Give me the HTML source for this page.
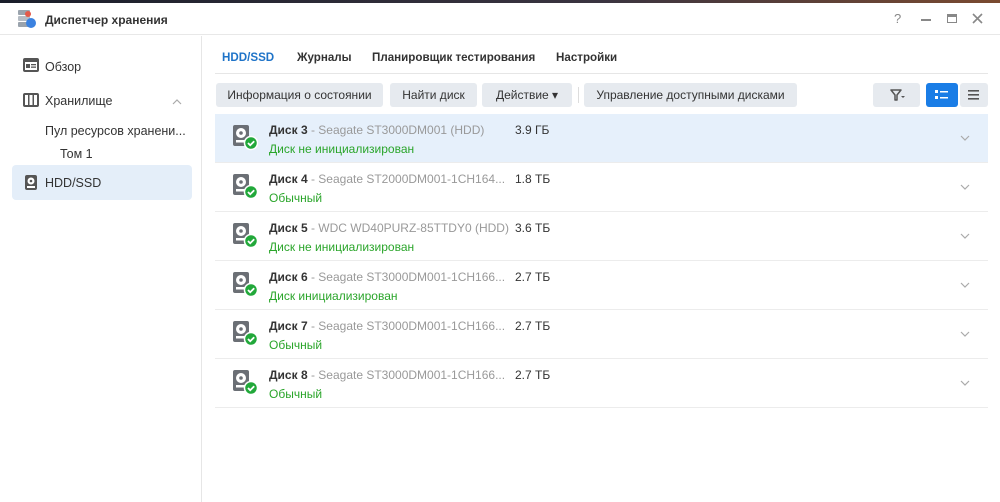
<!DOCTYPE html><html><head><meta charset="utf-8"><style>
*{margin:0;padding:0;box-sizing:border-box}
body{width:1000px;height:502px;overflow:hidden;background:#fff;font-family:"Liberation Sans","DejaVu Sans",sans-serif;font-size:12px;color:#333;position:relative}
.top{position:absolute;left:0;top:0;width:1000px;height:3px;background:linear-gradient(90deg,#1a1e2a,#3a3440 60%,#7a4a30)}
.title{position:absolute;left:0;top:3px;width:1000px;height:32px;border-bottom:1px solid #e8e8e8}
.title span{position:absolute;left:45px;top:10px;font-weight:bold;font-size:12px;color:#333}
.side{position:absolute;left:0;top:36px;width:202px;height:466px;border-right:1px solid #e6e6e6}
.si{position:absolute;left:45px;font-size:12.5px;color:#333}
.a{position:absolute;}
.btn{position:absolute;top:83px;height:24px;background:#e6eaef;border-radius:3px;font-size:12px;color:#333;line-height:24px;text-align:center}
.row{position:absolute;left:215px;width:773px;height:49px;border-bottom:1px solid #ececec}
.row .n{position:absolute;left:54px;top:9px;font-size:12px;white-space:nowrap}
.row .n b{color:#333}.row .n i{font-style:normal;color:#999}
.row .s{position:absolute;left:54px;top:28px;color:#2aa52a;font-size:12px}
.row .sz{position:absolute;left:300px;top:9px;color:#333}
.row svg.ic{position:absolute;left:17px;top:11px}
.row svg.ch{position:absolute;left:745px;top:21px}
.tab{position:absolute;top:51px;font-weight:bold;font-size:11.6px}
</style></head><body>
<div class="top"></div>
<div class="title">
<svg class="a" style="left:17px;top:6px" width="20" height="20"><rect x="1" y="1" width="12" height="5" rx="1" fill="#9aa3ad"/><rect x="1" y="7" width="12" height="5" rx="1" fill="#b5bcc4"/><rect x="1" y="13" width="12" height="5" rx="1" fill="#9aa3ad"/><circle cx="14" cy="14" r="5" fill="#3b82e0"/><circle cx="11" cy="5" r="3" fill="#e35a4a"/></svg>
<span>Диспетчер хранения</span>
<div class="a" style="left:894px;top:8px;font-size:13px;color:#888">?</div>
<div class="a" style="left:921px;top:16px;width:10px;height:2px;background:#888"></div>
<div class="a" style="left:947px;top:11px;width:10px;height:9px;border:1.5px solid #888;border-top-width:3px"></div>
<svg class="a" style="left:972px;top:10px" width="11" height="11"><path d="M1 1L10 10M10 1L1 10" stroke="#888" stroke-width="1.6"/></svg>
</div>
<div class="side">
<svg class="a" style="left:23px;top:22px" width="16" height="14"><rect width="16" height="14" rx="2" fill="#555"/><rect x="2" y="4" width="12" height="8" fill="#fff"/><rect x="3" y="6" width="4" height="4" fill="#555"/><rect x="8" y="6" width="5" height="1.3" fill="#555"/><rect x="8" y="8.5" width="5" height="1.3" fill="#555"/></svg>
<div class="si" style="top:24px">Обзор</div>
<svg class="a" style="left:23px;top:57px" width="16" height="14"><rect width="16" height="14" rx="2" fill="#555"/><rect x="2" y="2" width="3" height="10" fill="#fff"/><rect x="6.5" y="2" width="3" height="10" fill="#fff"/><rect x="11" y="2" width="3" height="10" fill="#fff"/></svg>
<div class="si" style="top:58px">Хранилище</div>
<svg class="a" style="left:172px;top:63px" width="10" height="6"><path d="M1 5L5 1L9 5" stroke="#aaa" stroke-width="1.2" fill="none"/></svg>
<div class="si" style="top:88px">Пул ресурсов хранени...</div>
<div class="si" style="top:111px;left:60px">Том 1</div>
<div class="a" style="left:12px;top:129px;width:180px;height:35px;background:#e4eef9;border-radius:4px"></div>
<svg class="a" style="left:25px;top:139px" width="12" height="15"><rect width="12" height="15" rx="2" fill="#555"/><circle cx="6" cy="6" r="3.5" fill="#fff"/><circle cx="6" cy="6" r="1.3" fill="#555"/><rect x="2" y="11" width="8" height="2" fill="#fff"/></svg>
<div class="si" style="top:140px">HDD/SSD</div>
</div>
<div class="tab" style="left:222px;color:#1e73c8">HDD/SSD</div>
<div class="tab" style="left:297px">Журналы</div>
<div class="tab" style="left:372px">Планировщик тестирования</div>
<div class="tab" style="left:556px">Настройки</div>
<div class="a" style="left:215px;top:73px;width:773px;height:1px;background:#e6e6e6"></div>
<div class="btn" style="left:216px;width:167px">Информация о состоянии</div>
<div class="btn" style="left:390px;width:87px">Найти диск</div>
<div class="btn" style="left:482px;width:90px">Действие ▾</div>
<div class="a" style="left:578px;top:87px;width:1px;height:16px;background:#ddd"></div>
<div class="btn" style="left:584px;width:213px">Управление доступными дисками</div>
<div class="btn" style="left:873px;width:47px"></div>
<svg class="a" style="left:890px;top:88px" width="16" height="14"><path d="M1 2H11L7 7V12L5 12V7Z" fill="none" stroke="#555" stroke-width="1.5" stroke-linejoin="round"/><path d="M11 8H15L13 10Z" fill="#555"/></svg>
<div class="btn" style="left:926px;width:32px;background:#1a7de6"></div>
<svg class="a" style="left:935px;top:89px" width="14" height="12"><rect x="0" y="1" width="3" height="3" fill="#fff"/><rect x="5" y="2" width="8" height="1.5" fill="#fff"/><rect x="0" y="7" width="3" height="3" fill="#fff"/><rect x="5" y="8" width="8" height="1.5" fill="#fff"/></svg>
<div class="btn" style="left:960px;width:28px"></div>
<svg class="a" style="left:968px;top:90px" width="12" height="10"><rect y="0" width="11" height="1.6" fill="#555"/><rect y="4" width="11" height="1.6" fill="#555"/><rect y="8" width="11" height="1.6" fill="#555"/></svg>
<div class="row" style="top:114px;background:#e6f0fb">
<svg class="ic" width="26" height="26"><rect x="1" y="0" width="16" height="21" rx="2" fill="#6b6f75"/><circle cx="9" cy="8" r="5" fill="#fff"/><circle cx="9" cy="8" r="1.8" fill="#6b6f75"/><rect x="4" y="15" width="10" height="2.5" fill="#fff"/><circle cx="19" cy="18" r="6.5" fill="#22a83a" stroke="#fff" stroke-width="1.5"/><path d="M16 18l2.2 2.2 4-4" stroke="#fff" stroke-width="1.8" fill="none"/></svg>
<div class="n"><b>Диск 3</b> <i>- Seagate ST3000DM001 (HDD)</i></div><div class="sz">3.9 ГБ</div><div class="s">Диск не инициализирован</div><svg class="ch" width="10" height="6"><path d="M1 1L5 5L9 1" stroke="#aaa" stroke-width="1.2" fill="none"/></svg></div>
<div class="row" style="top:163px">
<svg class="ic" width="26" height="26"><rect x="1" y="0" width="16" height="21" rx="2" fill="#6b6f75"/><circle cx="9" cy="8" r="5" fill="#fff"/><circle cx="9" cy="8" r="1.8" fill="#6b6f75"/><rect x="4" y="15" width="10" height="2.5" fill="#fff"/><circle cx="19" cy="18" r="6.5" fill="#22a83a" stroke="#fff" stroke-width="1.5"/><path d="M16 18l2.2 2.2 4-4" stroke="#fff" stroke-width="1.8" fill="none"/></svg>
<div class="n"><b>Диск 4</b> <i>- Seagate ST2000DM001-1CH164...</i></div><div class="sz">1.8 ТБ</div><div class="s">Обычный</div><svg class="ch" width="10" height="6"><path d="M1 1L5 5L9 1" stroke="#aaa" stroke-width="1.2" fill="none"/></svg></div>
<div class="row" style="top:212px">
<svg class="ic" width="26" height="26"><rect x="1" y="0" width="16" height="21" rx="2" fill="#6b6f75"/><circle cx="9" cy="8" r="5" fill="#fff"/><circle cx="9" cy="8" r="1.8" fill="#6b6f75"/><rect x="4" y="15" width="10" height="2.5" fill="#fff"/><circle cx="19" cy="18" r="6.5" fill="#22a83a" stroke="#fff" stroke-width="1.5"/><path d="M16 18l2.2 2.2 4-4" stroke="#fff" stroke-width="1.8" fill="none"/></svg>
<div class="n"><b>Диск 5</b> <i>- WDC WD40PURZ-85TTDY0 (HDD)</i></div><div class="sz">3.6 ТБ</div><div class="s">Диск не инициализирован</div><svg class="ch" width="10" height="6"><path d="M1 1L5 5L9 1" stroke="#aaa" stroke-width="1.2" fill="none"/></svg></div>
<div class="row" style="top:261px">
<svg class="ic" width="26" height="26"><rect x="1" y="0" width="16" height="21" rx="2" fill="#6b6f75"/><circle cx="9" cy="8" r="5" fill="#fff"/><circle cx="9" cy="8" r="1.8" fill="#6b6f75"/><rect x="4" y="15" width="10" height="2.5" fill="#fff"/><circle cx="19" cy="18" r="6.5" fill="#22a83a" stroke="#fff" stroke-width="1.5"/><path d="M16 18l2.2 2.2 4-4" stroke="#fff" stroke-width="1.8" fill="none"/></svg>
<div class="n"><b>Диск 6</b> <i>- Seagate ST3000DM001-1CH166...</i></div><div class="sz">2.7 ТБ</div><div class="s">Диск инициализирован</div><svg class="ch" width="10" height="6"><path d="M1 1L5 5L9 1" stroke="#aaa" stroke-width="1.2" fill="none"/></svg></div>
<div class="row" style="top:310px">
<svg class="ic" width="26" height="26"><rect x="1" y="0" width="16" height="21" rx="2" fill="#6b6f75"/><circle cx="9" cy="8" r="5" fill="#fff"/><circle cx="9" cy="8" r="1.8" fill="#6b6f75"/><rect x="4" y="15" width="10" height="2.5" fill="#fff"/><circle cx="19" cy="18" r="6.5" fill="#22a83a" stroke="#fff" stroke-width="1.5"/><path d="M16 18l2.2 2.2 4-4" stroke="#fff" stroke-width="1.8" fill="none"/></svg>
<div class="n"><b>Диск 7</b> <i>- Seagate ST3000DM001-1CH166...</i></div><div class="sz">2.7 ТБ</div><div class="s">Обычный</div><svg class="ch" width="10" height="6"><path d="M1 1L5 5L9 1" stroke="#aaa" stroke-width="1.2" fill="none"/></svg></div>
<div class="row" style="top:359px">
<svg class="ic" width="26" height="26"><rect x="1" y="0" width="16" height="21" rx="2" fill="#6b6f75"/><circle cx="9" cy="8" r="5" fill="#fff"/><circle cx="9" cy="8" r="1.8" fill="#6b6f75"/><rect x="4" y="15" width="10" height="2.5" fill="#fff"/><circle cx="19" cy="18" r="6.5" fill="#22a83a" stroke="#fff" stroke-width="1.5"/><path d="M16 18l2.2 2.2 4-4" stroke="#fff" stroke-width="1.8" fill="none"/></svg>
<div class="n"><b>Диск 8</b> <i>- Seagate ST3000DM001-1CH166...</i></div><div class="sz">2.7 ТБ</div><div class="s">Обычный</div><svg class="ch" width="10" height="6"><path d="M1 1L5 5L9 1" stroke="#aaa" stroke-width="1.2" fill="none"/></svg></div>
</body></html>
